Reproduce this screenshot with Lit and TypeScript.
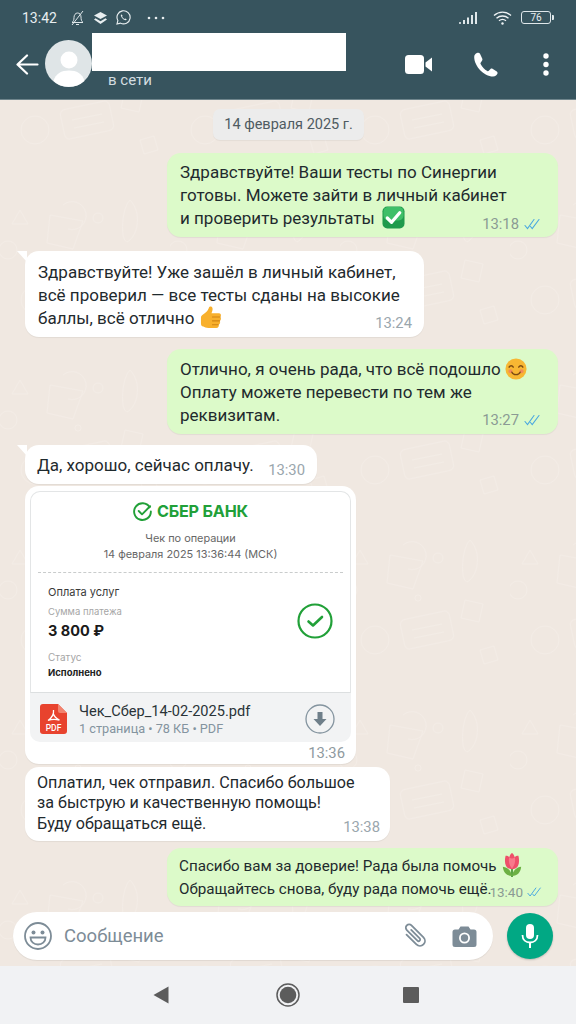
import { LitElement, html, css } from "lit";
import { customElement } from "lit/decorators.js";

const ticks = html`<svg class="ticks" viewBox="0 0 18 12" fill="none" stroke="#4aa8e0" stroke-width="1.1" stroke-linecap="round"><path d="M1 7.5l2.5 3L10 1.5"/><path d="M6.5 8.5l1.7 2L15 1.5"/></svg>`;

const checkEmoji = html`<svg class="emoji ce" viewBox="0 0 24 24"><rect x="0.5" y="0.5" width="23" height="23" rx="5" fill="#1f9a4c"/><rect x="1.5" y="1" width="21" height="14" rx="5" fill="#3fbf68"/><path d="M5.5 12.5l4.5 4.5 8.5-10" fill="none" stroke="#fff" stroke-width="3.4" stroke-linecap="round" stroke-linejoin="round"/></svg>`;

const thumb = html`<svg class="emoji" viewBox="0 0 24 24"><path d="M1 12c0-1.5 1-2.5 2.5-3.5C6 7 8 5 9 2.5 9.5 1 10 .5 11 .5c2 0 2.500 2 2 4-.3 1.500-1 3-1 3h8c2 0 2.500 3 1 4 1.500 1 1 3.500-.5 4 1 1.500.5 3.500-1 4 .5 1.500-.5 3.500-2.500 3.500H9c-3 0-4-1-5.500-1.500C1.500 21 1 20 1 18z" fill="#f8b02c"/><path d="M13 11.500h8M13 15.500h7.500M13 19.500h6" stroke="#cf8414" stroke-width="1.1" stroke-linecap="round"/></svg>`;

const smile = html`<svg class="emoji sm" viewBox="0 0 24 24"><circle cx="12" cy="12" r="11.5" fill="#f7b733"/><path d="M4.5 10c1-2 3.500-2 4.500 0M15 10c1-2 3.500-2 4.500 0" fill="none" stroke="#7a4a12" stroke-width="1.5" stroke-linecap="round"/><circle cx="6" cy="14.5" r="2.2" fill="#f28a5b"/><circle cx="18" cy="14.5" r="2.2" fill="#f28a5b"/><path d="M7.500 15.500c1.500 3.500 7.500 3.500 9 0" fill="none" stroke="#7a4a12" stroke-width="1.5" stroke-linecap="round"/></svg>`;

const tulip = html`<svg class="emoji tulip" viewBox="0 0 24 28"><path d="M12 27V16" stroke="#4f9a3a" stroke-width="2"/><path d="M12 26C6 26 2.500 22 2 16c5 .5 9 4 10 10zM12 26c6 0 9.500-4 10-10-5 .5-9 4-10 10z" fill="#6cb043"/><path d="M5 4c2 0 3 .5 4 1.500C10 3 11 1.500 12 1c1 .5 2 2 3 4.500C16 4.500 17 4 19 4c1 4 1 8-.5 11-1.500 2.500-4 3.500-6.500 3.500S7 17.500 5.500 15C4 12 4 8 5 4z" fill="#ee4f6a"/><path d="M9 5.500C8 9 8.500 13 12 18c3.500-5 4-9 3-12.500-1 1-2 1.500-3 1.500s-2-.500-3-1.500z" fill="#f8798b"/></svg>`;

@customElement("app-root")
export class AppRoot extends LitElement {
  static styles = css`
    :host { display: block; width: 576px; height: 1024px; font-family: Roboto, "Noto Sans", sans-serif; overflow: hidden; }
    .page { display: flex; flex-direction: column; height: 1024px; background-color: #f0e8e1; background-image: url("data:image/svg+xml,%3Csvg xmlns='http://www.w3.org/2000/svg' width='170' height='170' fill='none' stroke='%23f3ece6' stroke-width='1'%3E%3Cpath d='M50 45l-3 28 26 6 10-28zM63 35a14 14 0 1 1 5 24'/%3E%3Ccircle cx='98' cy='48' r='5'/%3E%3Ccircle cx='78' cy='88' r='3'/%3E%3Crect x='62' y='105' width='50' height='30' rx='5' transform='rotate(-12 87 120)'/%3E%3Cpath d='M72 120l30-6M74 128l30-6'/%3E%3Ccircle cx='35' cy='130' r='14'/%3E%3Cpath d='M130 30c10 10 10 30 0 40s-10-30 0-40zM125 90l18 4-4 18-18-4zM20 40l8 14-16 0z'/%3E%3Ccircle cx='8' cy='80' r='9'/%3E%3Cpath d='M140 140l14-4 4 14-14 4z'/%3E%3C/svg%3E"); }
    .head { height: 99px; flex: none; background: #37545e; border-bottom: 1px solid #6f858c; display: flex; flex-direction: column; color: #fff; }
    .status { height: 33px; display: flex; align-items: center; padding: 2px 25px 0 22px; box-sizing: border-box; }
    .clock { font-size: 14px; color: #e8eef0; width: 48px; }
    .status svg { display: block; }
    .s-left { display: flex; align-items: center; gap: 8px; }
    .more { margin-left: 8px; }
    .s-right { margin-left: auto; display: flex; align-items: center; gap: 16px; }
    .batt { width: 30px; height: 13px; margin-left: -7px; box-sizing: border-box; border: 1px solid #dfe7ea; border-radius: 3px; font-size: 10px; line-height: 11px; text-align: center; color: #e8eef0; position: relative; }
    .batt::after { content: ""; position: absolute; right: -4px; top: 3px; width: 2px; height: 5px; background: #dfe7ea; border-radius: 0 1px 1px 0; }
    .main { flex: 1; display: flex; align-items: flex-start; padding-left: 16px; }
    .back { margin-top: 20px; width: 23px; height: 23px; }
    .avatar { width: 47px; height: 47px; margin-left: 6px; margin-top: 7px; flex: none; }
    .who { display: flex; flex-direction: column; }
    .redact { width: 254px; height: 38px; background: #fff; box-sizing: border-box; }
    .online { font-size: 15px; line-height: 18px; margin-left: 16px; color: #d3dde0; }
    .acts { margin-left: auto; display: flex; align-items: center; padding-right: 27px; padding-top: 19px; }
    .chat { flex: 1; display: flex; flex-direction: column; padding: 9px 18px 0 25px; min-height: 0; }
    .date { align-self: center; font-size: 14.5px; line-height: 31px; height: 31px; padding: 0 11px; background: #ececec; border-radius: 7px; color: #4f5b62; margin-right: 6px; box-shadow: 0 1px 1px rgba(0,0,0,.05); }
    .msg { position: relative; box-sizing: border-box; border-radius: 14px; display: flex; align-items: flex-end; font-size: 17px; line-height: 23px; color: #1f2a2e; padding: 6px 12px 7px 13px; box-shadow: 0 1px 1px rgba(0,0,0,.06); }
    .out { align-self: flex-end; background: #dcfac9; width: 391px; }
    .in { align-self: flex-start; background: #fff; }
    .tail::before { content: ""; position: absolute; left: -8px; top: 0; width: 0; height: 0; border-top: 11px solid #fff; border-left: 10px solid transparent; }
    .txt { white-space: nowrap; flex: 1 1 0; min-width: 0; }
    .meta { flex: none; display: flex; align-items: center; gap: 5px; font-size: 14.8px; line-height: 16px; color: #8b9a94; white-space: nowrap; margin-right: 4px; margin-bottom: -1px; }
    .in .meta { color: #9aa6ad; margin-right: 0; }
    .ticks { width: 18px; height: 12px; flex: none; }
    .emoji { display: inline-block; width: 23px; height: 23px; margin: -4px 0 -5px 1px; }
    .emoji.ce { margin-left: 3px; }
    .emoji.sm { width: 22px; height: 22px; margin-left: 0; }
    .tulip { width: 22px; height: 26px; margin: -6px 0 -7px 1px; }
    .m1 { margin-top: 13px; height: 84px; padding-top: 3px; }
    .m1 .meta { margin-bottom: -2px; }
    .m2 { margin-top: 14px; width: 399px; height: 86px; padding-top: 10px; }
    .m3 { margin-top: 12px; height: 85px; padding-top: 10px; }
    .m4 { margin-top: 11px; width: 292px; height: 39px; padding-left: 12px; }
    .card { margin-top: 2px; align-self: flex-start; width: 331px; height: 278px; background: #fff; border-radius: 14px; padding: 5px; box-sizing: border-box; display: flex; flex-direction: column; box-shadow: 0 1px 1px rgba(0,0,0,.06); }
    .rcpt { height: 202px; flex: none; box-sizing: border-box; border: 1px solid #e3e5e6; border-bottom-color: #dcdfe0; border-radius: 10px 10px 0 0; display: flex; flex-direction: column; color: #2b2b2b; }
    .logo { display: flex; align-items: center; justify-content: center; gap: 5px; margin-top: 9px; height: 20px; color: #21a038; font-weight: 700; font-size: 16.2px; font-family: Inter, Roboto, sans-serif; letter-spacing: -.2px; }
    .logo svg { width: 19px; height: 19px; }
    .cap { text-align: center; font-size: 10.9px; line-height: 16px; color: #666; font-family: Inter, Roboto, sans-serif; }
    .cap.first { margin-top: 9px; }
    .dash { margin: 10px 7px 0 7px; border-top: 1px dashed #c9cccc; }
    .body { display: flex; align-items: flex-start; justify-content: space-between; padding: 12px 17px 0 17px; font-family: Inter, Roboto, sans-serif; }
    .svc { font-size: 11px; line-height: 14px; color: #3a3a3a; }
    .lbl { font-size: 9.5px; line-height: 12px; color: #a6a6a6; margin-top: 7px; }
    .sum { font-size: 14.5px; font-weight: 700; line-height: 20px; color: #1a1a1a; margin-top: 3px; }
    .lbl.st { margin-top: 10px; font-size: 10px; }
    .done { font-size: 9.5px; font-weight: 700; line-height: 12px; color: #222; margin-top: 4px; }
    .big { width: 36px; height: 36px; margin-top: 18px; }
    .file { height: 49px; flex: none; background: #f2f3f4; border-radius: 0 0 10px 10px; display: flex; align-items: center; padding: 3px 16px 0 10px; box-sizing: border-box; }
    .pdf { width: 27px; height: 30px; flex: none; }
    .fname { margin-left: 12px; display: flex; flex-direction: column; margin-top: 2px; }
    .fn { font-size: 14.6px; line-height: 17px; color: #2a3338; }
    .fs { font-size: 12.7px; line-height: 17px; color: #84949f; }
    .dl { margin-left: auto; width: 30px; height: 30px; }
    .ctime { align-self: flex-end; font-size: 14.8px; line-height: 16px; color: #8f9aa0; margin: 3px 6px 0 0; }
    .m5 { margin-top: 3px; width: 365px; height: 74px; padding-top: 5px; padding-left: 12px; }
    .m5 .txt { line-height: 20.5px; }
    .msg.m5 { font-size: 16.15px; }
    .in.m5 .meta { margin-right: -2px; }
    .m6 { margin-top: 7px; height: 58px; padding-top: 8px; padding-left: 12px; }
    .msg.m6 { font-size: 15.2px; line-height: 23px; }
    .m6 .txt { margin-bottom: -2px; }
    .m6 .meta { font-size: 13.5px; margin-right: 3px; gap: 4px; }
    .m6 .ticks { width: 16px; }
    .bar { flex: none; display: flex; align-items: center; padding: 0 23px 0 13px; height: 60px; box-sizing: border-box; }
    .input { width: 480px; height: 48px; background: #fff; border-radius: 24px; display: flex; align-items: center; padding: 0 16px 0 11px; box-sizing: border-box; box-shadow: 0 1px 1px rgba(0,0,0,.07); color: #7d8c97; }
    .ph { font-size: 18.5px; margin-left: 12px; }
    .clip { margin-left: auto; width: 28px; height: 28px; }
    .cam { margin-left: 23px; width: 25px; height: 25px; }
    .mic { width: 46px; height: 46px; border-radius: 50%; background: #01a884; margin-left: 14px; display: flex; align-items: center; justify-content: center; box-shadow: 0 1px 2px rgba(0,0,0,.2); }
    .nav { flex: none; height: 58px; background: #f1f2f4; display: flex; align-items: center; padding-left: 153px; }
    .tri { width: 16px; height: 18px; }
    .home { width: 24px; height: 24px; margin-left: 107px; }
    .sq { width: 16px; height: 16px; background: #5c5c5c; margin-left: 103px; border-radius: 1px; }
    .ph2 { margin-left: 42px; }
    .dots { margin-left: 45px; }
  `;

  render() {
    return html`<div class="page">
      <div class="head">
        <div class="status">
          <div class="clock">13:42</div>
          <div class="s-left">
            <svg width="15" height="16" viewBox="0 0 15 16" fill="none" stroke="#dfe7ea" stroke-width="1"><path d="M2 12.5c1.500-1 2-2.500 2-5 0-2.500 1.500-4.500 3.500-4.500S11 4.500 11 7c0 2.500.5 4.500 2 5.500H2z"/><path d="M6 14.500h3M2 15L13 1"/></svg>
            <svg width="15" height="14" viewBox="0 0 15 14" fill="#e8eef0"><path d="M7.500 1L14 4.500 7.500 8 1 4.500z"/><path d="M2.500 7.200L1 8.500 7.500 13 14 8.500l-1.500-1.300-5 3z"/></svg>
            <svg width="15" height="15" viewBox="0 0 16 16" fill="none" stroke="#e8eef0" stroke-width="1.2"><path d="M1 15l1-3.700A7 7 0 1 1 4.800 14z"/><path d="M5.500 4.500c-1 1 .3 3.300 1.500 4.500s3.300 2.500 4.500 1.500l-1.300-1.500-1 .5C7.800 9 7 8.200 6.500 7l.6-1z" fill="#e8eef0" stroke="none"/></svg>
            <svg class="more" width="18" height="4" viewBox="0 0 18 4" fill="#e8eef0"><circle cx="2" cy="2" r="1.3"/><circle cx="9" cy="2" r="1.3"/><circle cx="16" cy="2" r="1.3"/></svg>
          </div>
          <div class="s-right">
            <svg width="18" height="14" viewBox="0 0 18 14" fill="#dfe7ea"><rect x="0" y="11" width="2" height="2" opacity=".8"/><rect x="4" y="9" width="2" height="4"/><rect x="8" y="6.500" width="2" height="6.500"/><rect x="12" y="4" width="2" height="9"/><rect x="16" y="1" width="2" height="12"/></svg>
            <svg width="19" height="14" viewBox="0 0 19 14" fill="none" stroke="#eef3f5" stroke-width="1.4"><path d="M1 4.500c5-4.500 12-4.500 17 0M3.500 7.200c3.500-3 8.500-3 12 0M6 9.800c2-1.600 5-1.600 7 0"/><circle cx="9.500" cy="12.500" r="1.2" fill="#eef3f5" stroke="none"/></svg>
            <div class="batt">76</div>
          </div>
        </div>
        <div class="main">
          <svg class="back" viewBox="0 0 23 23" fill="none" stroke="#fff" stroke-width="2.2" stroke-linecap="round" stroke-linejoin="round"><path d="M21.500 11.500H2M11 2.500l-9.500 9 9.500 9"/></svg>
          <svg class="avatar" viewBox="0 0 47 47"><circle cx="23.500" cy="23.500" r="23.500" fill="#dfe5e7"/><circle cx="24" cy="20" r="8.500" fill="#fff"/><path d="M8.500 41c2-7.500 8-10.500 15.500-10.500S37.500 33.500 39.500 41a23.500 23.500 0 0 1-31 0z" fill="#fff"/></svg>
          <div class="who">
            <div class="redact"></div>
            <div class="online">в сети</div>
          </div>
          <div class="acts">
            <svg width="27" height="19" viewBox="0 0 27 19" fill="#fff"><rect x="0" y="0" width="19" height="19" rx="3.500"/><path d="M20.500 7.500L27 2.500v14l-6.500-5z"/></svg>
            <svg class="ph2" width="24" height="25" viewBox="0 0 24 25" fill="#fff"><path d="M3 1c-1.500.5-2.800 2-2.800 4C.2 14 10 24.500 19 24.500c2.500 0 4-1.500 4.500-3 .2-.8 0-1.500-.7-2l-4.300-2.700c-.7-.4-1.500-.3-2 .2l-1.700 1.800c-.4.4-1 .5-1.500.2-2.800-1.500-5.300-4.200-6.700-7-.3-.5-.2-1 .2-1.400L8 8.700c.5-.5.600-1.300.3-2L6 1.700C5.500.8 4.200.6 3 1z"/></svg>
            <svg class="dots" width="6" height="23" viewBox="0 0 6 23" fill="#fff"><circle cx="3" cy="3" r="2.700"/><circle cx="3" cy="11.500" r="2.700"/><circle cx="3" cy="20" r="2.700"/></svg>
          </div>
        </div>
      </div>

      <div class="chat">
        <div class="date">14 февраля 2025 г.</div>
        <div class="msg out m1"><div class="txt">Здравствуйте! Ваши тесты по Синергии<br>готовы. Можете зайти в личный кабинет<br>и проверить результаты ${checkEmoji}</div><div class="meta">13:18 ${ticks}</div></div>
        <div class="msg in tail m2"><div class="txt">Здравствуйте! Уже зашёл в личный кабинет,<br>всё проверил — все тесты сданы на высокие<br>баллы, всё отлично ${thumb}</div><div class="meta">13:24</div></div>
        <div class="msg out m3"><div class="txt">Отлично, я очень рада, что всё подошло ${smile}<br>Оплату можете перевести по тем же<br>реквизитам.</div><div class="meta">13:27 ${ticks}</div></div>
        <div class="msg in tail m4"><div class="txt">Да, хорошо, сейчас оплачу.</div><div class="meta">13:30</div></div>
        <div class="card">
          <div class="rcpt">
            <div class="logo"><svg viewBox="0 0 20 20" fill="none" stroke="#21a038" stroke-width="2" stroke-linecap="round" stroke-linejoin="round"><path d="M17.500 5.500A8.800 8.800 0 1 0 18.800 10"/><path d="M6 9.500l3.500 3.500 8.500-8.500"/></svg>СБЕР БАНК</div>
            <div class="cap first">Чек по операции</div>
            <div class="cap">14 февраля 2025 13:36:44 (МСК)</div>
            <div class="dash"></div>
            <div class="body">
              <div>
                <div class="svc">Оплата услуг</div>
                <div class="lbl">Сумма платежа</div>
                <div class="sum">3 800 ₽</div>
                <div class="lbl st">Статус</div>
                <div class="done">Исполнено</div>
              </div>
              <svg class="big" viewBox="0 0 36 36" fill="none" stroke="#21a038" stroke-width="2.2" stroke-linecap="round" stroke-linejoin="round"><circle cx="18" cy="18" r="16.500"/><path d="M11.500 18.500l4.500 4 9-8.500" stroke-width="2.600"/></svg>
            </div>
          </div>
          <div class="file">
            <svg class="pdf" viewBox="0 0 27 30"><path d="M3 0h15l9 9v18a3 3 0 0 1-3 3H3a3 3 0 0 1-3-3V3a3 3 0 0 1 3-3z" fill="#e8432e"/><path d="M18 0l9 9h-7a2 2 0 0 1-2-2z" fill="#f2836f"/><path d="M13.500 6c.5 4-2 8-5.500 10.500M13 9c1 3 3 5.500 6.500 7M8 16.500c3-1.300 7.500-1.500 11.500-.5" fill="none" stroke="#fff" stroke-width="1.3"/><text x="13.500" y="27" font-size="8.500" font-family="Roboto, sans-serif" font-weight="500" fill="#fff" text-anchor="middle">PDF</text></svg>
            <div class="fname"><div class="fn">Чек_Сбер_14-02-2025.pdf</div><div class="fs">1 страница • 78 КБ • PDF</div></div>
            <svg class="dl" viewBox="0 0 30 30"><circle cx="15" cy="15" r="14" fill="none" stroke="#84949f" stroke-width="1.3"/><path d="M12.500 8h5v7h4L15 22l-6.500-7h4z" fill="#6f7f8a"/></svg>
          </div>
          <div class="ctime">13:36</div>
        </div>
        <div class="msg in m5"><div class="txt">Оплатил, чек отправил. Спасибо большое<br>за быструю и качественную помощь!<br>Буду обращаться ещё.</div><div class="meta">13:38</div></div>
        <div class="msg out m6"><div class="txt">Спасибо вам за доверие! Рада была помочь ${tulip}<br>Обращайтесь снова, буду рада помочь ещё.</div><div class="meta">13:40 ${ticks}</div></div>
      </div>

      <div class="bar">
        <div class="input">
          <svg width="28" height="28" viewBox="0 0 28 28" fill="none" stroke="#7d8c97" stroke-width="1.8"><circle cx="14" cy="14" r="13"/><circle cx="9.500" cy="10.500" r="2" fill="#7d8c97" stroke="none"/><circle cx="18.500" cy="10.500" r="2" fill="#7d8c97" stroke="none"/><path d="M6.500 15.500h15c0 4.500-3.500 7-7.500 7s-7.500-2.500-7.500-7z"/></svg>
          <span class="ph">Сообщение</span>
          <svg class="clip" viewBox="0 0 28 28" fill="none" stroke="#7d8c97" stroke-width="1.8" stroke-linecap="round"><g transform="rotate(-45 14 14)"><path d="M9 8v14a5 5 0 0 0 10 0V5a3.300 3.300 0 0 0-6.600 0v15a1.600 1.600 0 0 0 3.200 0V8" transform="translate(0 -1)"/></g></svg>
          <svg class="cam" viewBox="0 0 25 25" fill="#7d8c97"><path d="M8.500 2.500h8l2 3H22a2.500 2.500 0 0 1 2.500 2.500v12.500A2.500 2.500 0 0 1 22 23H3a2.500 2.500 0 0 1-2.500-2.500V8A2.500 2.500 0 0 1 3 5.500h3.500z"/><circle cx="12.500" cy="14" r="5.500" fill="#fff"/><circle cx="12.500" cy="14" r="3.700" fill="#7d8c97"/></svg>
        </div>
        <div class="mic"><svg width="18" height="26" viewBox="0 0 18 26" fill="#fff"><rect x="5" y="1" width="8" height="15" rx="4"/><path d="M1.500 12c0 5 3.500 7.500 7.500 7.500s7.500-2.500 7.500-7.500" fill="none" stroke="#fff" stroke-width="1.8"/><rect x="8" y="19" width="2" height="6"/></svg></div>
      </div>

      <div class="nav">
        <svg class="tri" viewBox="0 0 16 18" fill="#5c5c5c"><path d="M15.500 0.500v17L0.500 9z"/></svg>
        <svg class="home" viewBox="0 0 24 24"><circle cx="12" cy="12" r="11" fill="none" stroke="#5c5c5c" stroke-width="1.5"/><circle cx="12" cy="12" r="8.300" fill="#5c5c5c"/></svg>
        <div class="sq"></div>
      </div>
    </div>`;
  }
}
